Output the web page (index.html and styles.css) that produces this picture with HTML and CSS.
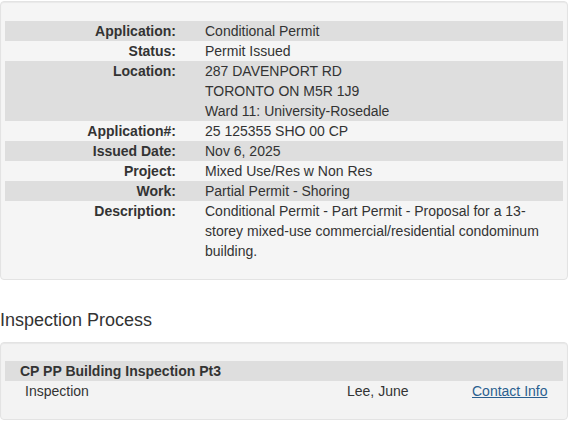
FILE: index.html
```html
<!DOCTYPE html>
<html>
<head>
<meta charset="utf-8">
<link rel="stylesheet" href="styles.css">
</head>
<body>
<div class="well details">
  <div class="row alt"><div class="lbl">Application:</div><div class="val">Conditional Permit</div></div>
  <div class="row"><div class="lbl">Status:</div><div class="val">Permit Issued</div></div>
  <div class="row alt"><div class="lbl">Location:</div><div class="val">287 DAVENPORT RD<br>TORONTO ON M5R 1J9<br>Ward 11: University-Rosedale</div></div>
  <div class="row"><div class="lbl">Application#:</div><div class="val">25 125355 SHO 00 CP</div></div>
  <div class="row alt"><div class="lbl">Issued Date:</div><div class="val">Nov 6, 2025</div></div>
  <div class="row"><div class="lbl">Project:</div><div class="val">Mixed Use/Res w Non Res</div></div>
  <div class="row alt"><div class="lbl">Work:</div><div class="val">Partial Permit - Shoring</div></div>
  <div class="row"><div class="lbl">Description:</div><div class="val">Conditional Permit - Part Permit - Proposal for a 13-storey mixed-use commercial/residential condominum building.</div></div>
</div>
<h2 class="heading">Inspection Process</h2>
<div class="well insp">
  <div class="insp-head">CP PP Building Inspection Pt3</div>
  <div class="insp-row">
    <span>Inspection</span>
    <span>Lee, June</span>
    <a href="#" class="link">Contact Info</a>
  </div>
</div>
</body>
</html>
```
FILE: styles.css
```css
html, body {
  margin: 0;
  padding: 0;
  background: #fff;
}
body {
  font-family: "Liberation Sans", Arial, sans-serif;
  font-size: 14px;
  line-height: 20px;
  color: #333;
  padding-top: 1px;
}
.well {
  background: #f5f5f5;
  border: 1px solid #e3e3e3;
  border-radius: 4px;
  box-shadow: inset 0 1px 1px rgba(0,0,0,.05);
}
.details {
  padding: 19px 4px 18px 4px;
}
.row {
  display: grid;
  grid-template-columns: 171px 1fr;
}
.row.alt {
  background: #dedede;
}
.lbl {
  font-weight: bold;
  text-align: right;
}
.val {
  padding-left: 29px;
  padding-right: 8px;
}
.heading {
  font-size: 18px;
  font-weight: normal;
  line-height: 20px;
  margin: 30px 0 12px 0;
  color: #333;
}
.insp {
  background: #f3f3f3;
  padding: 18px 4px 18px 4px;
}
.insp-head {
  background: #dedede;
  font-weight: bold;
  padding-left: 15px;
}
.insp-row {
  display: grid;
  grid-template-columns: 322px 125px auto;
  padding-left: 20px;
  white-space: nowrap;
}
.link {
  color: #2a5f8f;
  text-decoration: underline;
}
```
